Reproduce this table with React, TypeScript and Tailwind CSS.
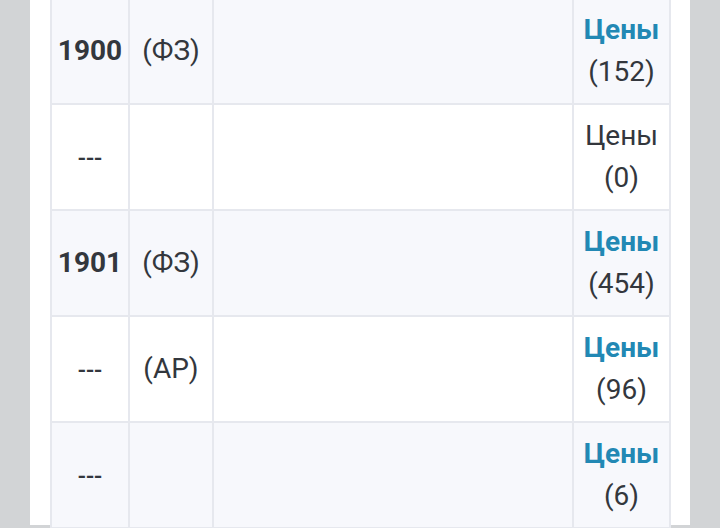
import React from 'react';

type Row = {
  year: string;
  bold: boolean;
  tag: string;
  link: boolean;
  count: string;
};

const rows: Row[] = [
  { year: '1900', bold: true, tag: '(ФЗ)', link: true, count: '(152)' },
  { year: '---', bold: false, tag: '', link: false, count: '(0)' },
  { year: '1901', bold: true, tag: '(ФЗ)', link: true, count: '(454)' },
  { year: '---', bold: false, tag: '(АР)', link: true, count: '(96)' },
  { year: '---', bold: false, tag: '', link: true, count: '(6)' },
];

export default function App() {
  return (
    <div
      className="w-[720px] h-[528px] overflow-hidden bg-[#d2d4d6] px-[30px]"
      style={{ fontFamily: 'Roboto, "Noto Sans", sans-serif' }}
    >
      <div className="h-full bg-white pl-[20px] pr-[21px]">
        <table className="-mt-[3px] w-[619px] border-collapse table-fixed text-[28px] leading-[42px] text-[#33373d]">
          <colgroup>
            <col className="w-[78px]" />
            <col className="w-[84px]" />
            <col className="w-[360px]" />
            <col className="w-[97px]" />
          </colgroup>
          <tbody>
            {rows.map((r, i) => (
              <tr key={i} className={`h-[106px] ${i % 2 === 0 ? 'bg-[#f7f8fc]' : 'bg-white'}`}>
                <td className="border-2 border-[#e6e8ee] text-center align-middle">
                  {r.bold ? (
                    <span className="font-bold">{r.year}</span>
                  ) : (
                    <span className="text-[24px] font-medium">{r.year}</span>
                  )}
                </td>
                <td className="border-2 border-[#e6e8ee] text-center align-middle">{r.tag}</td>
                <td className="border-2 border-[#e6e8ee]"></td>
                <td className="border-2 border-[#e6e8ee] text-center align-middle">
                  <div className={r.link ? 'font-bold text-[#2288b4]' : ''}>Цены</div>
                  <div>{r.count}</div>
                </td>
              </tr>
            ))}
          </tbody>
        </table>
      </div>
    </div>
  );
}
